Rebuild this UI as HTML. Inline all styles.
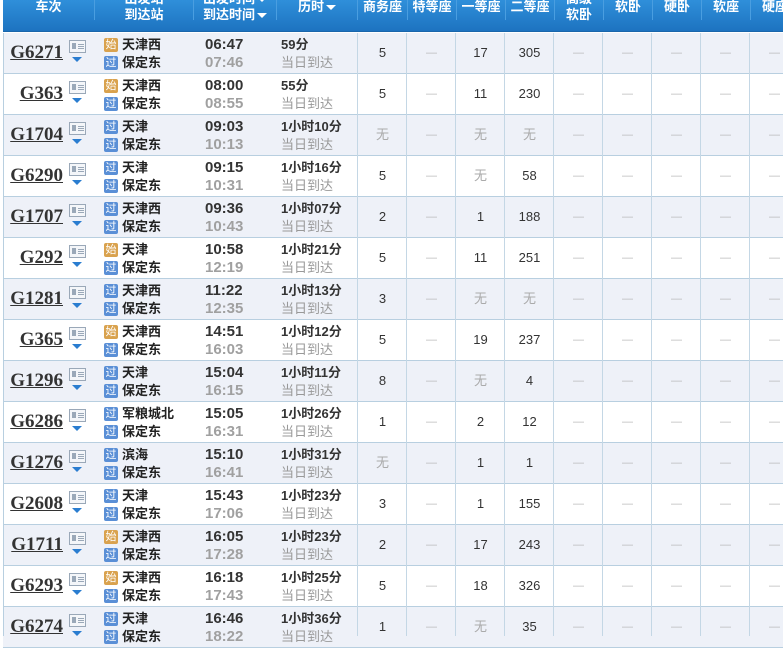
<!DOCTYPE html>
<html><head><meta charset="utf-8"><style>
*{margin:0;padding:0;box-sizing:border-box}
body{width:783px;height:636px;overflow:hidden;background:#fff;font-family:"Liberation Sans","Noto Sans CJK SC",sans-serif;position:relative}
.hd{position:absolute;left:3px;top:0;width:780px;height:32px;background:linear-gradient(#2f8fda,#1d73c0);border-bottom:1px solid #1a66ab}
.hs{position:absolute;top:0;height:20px;width:1px;background:#1d5f9c;border-right:1px solid #4a9ee0}
.ht{position:absolute;color:#fff;font-weight:bold;font-size:13px;text-align:center;line-height:16px;white-space:nowrap}
.tri{display:inline-block;width:0;height:0;border-left:5px solid transparent;border-right:5px solid transparent;border-top:5px solid #fff;vertical-align:middle;margin-left:2px}
.r{position:absolute;left:3px;width:780px;height:41px;border-bottom:1px solid #b8cfe0}
.r.s{background:#eef1f8}
.r div{position:absolute;white-space:nowrap}
.no{right:720px;top:9px;font-family:"Liberation Serif",serif;font-weight:bold;font-size:19px;color:#333;text-decoration:underline;line-height:22px}
.ic{left:66px;top:7px;width:17px;height:13px;border:1px solid #9aa8b8;background:#f4f6f9}
.ic:before{content:"";position:absolute;left:2px;top:2px;width:4px;height:6px;background:#9aa8b8}
.ic:after{content:"";position:absolute;left:8px;top:3px;width:6px;height:1px;background:#9aa8b8;box-shadow:0 2px 0 #9aa8b8,0 4px 0 #9aa8b8}
.ar{left:69px;top:24px;width:0;height:0;border-left:5px solid transparent;border-right:5px solid transparent;border-top:5px solid #2a7dd0}
.b{left:101px;width:14px;height:14px;color:#fff;font-size:11px;line-height:14px;text-align:center;border-radius:2px}
.b1{top:5px}.b2{top:23px}
.o{background:#d9a24e}.u{background:#5a8fd6}
.st{left:119px;font-size:13px;font-weight:bold;color:#222;line-height:16px}
.s1{top:4px}.s2{top:22px}
.t{left:202px;font-size:15px;font-weight:bold;line-height:17px}
.t1{top:3px;color:#333}.t2{top:21px;color:#a0a0a0}
.d{left:278px;font-size:13px;line-height:16px}
.d1{top:4px;font-weight:bold;color:#333}.d2{top:22px;color:#999}
.c{top:12px;width:49px;text-align:center;font-size:13px;color:#333;line-height:16px}
.g{color:#aaa}
.x{color:#bbb;font-size:11px}
</style></head><body>
<div class="hd">
<div class="hs" style="left:91px"></div><div class="hs" style="left:190px"></div><div class="hs" style="left:273px"></div><div class="hs" style="left:354px"></div><div class="hs" style="left:404px"></div><div class="hs" style="left:453px"></div><div class="hs" style="left:502px"></div><div class="hs" style="left:551px"></div><div class="hs" style="left:600px"></div><div class="hs" style="left:649px"></div><div class="hs" style="left:698px"></div><div class="hs" style="left:747px"></div>
<div class="ht" style="left:0;width:91px;top:-1px">车次</div>
<div class="ht" style="left:92px;width:98px;top:-9px">出发站<br>到达站</div>
<div class="ht" style="left:191px;width:82px;top:-9px">出发时间<span class="tri"></span><br>到达时间<span class="tri"></span></div>
<div class="ht" style="left:274px;width:80px;top:-1px">历时<span class="tri"></span></div>
<div class="ht" style="left:355px;width:49px;top:-1px">商务座</div>
<div class="ht" style="left:405px;width:48px;top:-1px">特等座</div>
<div class="ht" style="left:454px;width:48px;top:-1px">一等座</div>
<div class="ht" style="left:503px;width:48px;top:-1px">二等座</div>
<div class="ht" style="left:552px;width:48px;top:-9px">高级<br>软卧</div>
<div class="ht" style="left:601px;width:48px;top:-1px">软卧</div>
<div class="ht" style="left:650px;width:48px;top:-1px">硬卧</div>
<div class="ht" style="left:699px;width:48px;top:-1px">软座</div>
<div class="ht" style="left:748px;width:48px;top:-1px">硬座</div>
</div>

<div class="r s" style="top:33px"><div class="no">G6271</div><div class="ic"></div><div class="ar"></div><div class="b b1 o">始</div><div class="b b2 u">过</div><div class="st s1">天津西</div><div class="st s2">保定东</div><div class="t t1">06:47</div><div class="t t2">07:46</div><div class="d d1">59分</div><div class="d d2">当日到达</div><div class="c" style="left:355px">5</div><div class="c x" style="left:404px">—</div><div class="c" style="left:453px">17</div><div class="c" style="left:502px">305</div><div class="c x" style="left:551px">—</div><div class="c x" style="left:600px">—</div><div class="c x" style="left:649px">—</div><div class="c x" style="left:698px">—</div><div class="c x" style="left:747px">—</div></div>
<div class="r" style="top:74px"><div class="no">G363</div><div class="ic"></div><div class="ar"></div><div class="b b1 o">始</div><div class="b b2 u">过</div><div class="st s1">天津西</div><div class="st s2">保定东</div><div class="t t1">08:00</div><div class="t t2">08:55</div><div class="d d1">55分</div><div class="d d2">当日到达</div><div class="c" style="left:355px">5</div><div class="c x" style="left:404px">—</div><div class="c" style="left:453px">11</div><div class="c" style="left:502px">230</div><div class="c x" style="left:551px">—</div><div class="c x" style="left:600px">—</div><div class="c x" style="left:649px">—</div><div class="c x" style="left:698px">—</div><div class="c x" style="left:747px">—</div></div>
<div class="r s" style="top:115px"><div class="no">G1704</div><div class="ic"></div><div class="ar"></div><div class="b b1 u">过</div><div class="b b2 u">过</div><div class="st s1">天津</div><div class="st s2">保定东</div><div class="t t1">09:03</div><div class="t t2">10:13</div><div class="d d1">1小时10分</div><div class="d d2">当日到达</div><div class="c g" style="left:355px">无</div><div class="c x" style="left:404px">—</div><div class="c g" style="left:453px">无</div><div class="c g" style="left:502px">无</div><div class="c x" style="left:551px">—</div><div class="c x" style="left:600px">—</div><div class="c x" style="left:649px">—</div><div class="c x" style="left:698px">—</div><div class="c x" style="left:747px">—</div></div>
<div class="r" style="top:156px"><div class="no">G6290</div><div class="ic"></div><div class="ar"></div><div class="b b1 u">过</div><div class="b b2 u">过</div><div class="st s1">天津</div><div class="st s2">保定东</div><div class="t t1">09:15</div><div class="t t2">10:31</div><div class="d d1">1小时16分</div><div class="d d2">当日到达</div><div class="c" style="left:355px">5</div><div class="c x" style="left:404px">—</div><div class="c g" style="left:453px">无</div><div class="c" style="left:502px">58</div><div class="c x" style="left:551px">—</div><div class="c x" style="left:600px">—</div><div class="c x" style="left:649px">—</div><div class="c x" style="left:698px">—</div><div class="c x" style="left:747px">—</div></div>
<div class="r s" style="top:197px"><div class="no">G1707</div><div class="ic"></div><div class="ar"></div><div class="b b1 u">过</div><div class="b b2 u">过</div><div class="st s1">天津西</div><div class="st s2">保定东</div><div class="t t1">09:36</div><div class="t t2">10:43</div><div class="d d1">1小时07分</div><div class="d d2">当日到达</div><div class="c" style="left:355px">2</div><div class="c x" style="left:404px">—</div><div class="c" style="left:453px">1</div><div class="c" style="left:502px">188</div><div class="c x" style="left:551px">—</div><div class="c x" style="left:600px">—</div><div class="c x" style="left:649px">—</div><div class="c x" style="left:698px">—</div><div class="c x" style="left:747px">—</div></div>
<div class="r" style="top:238px"><div class="no">G292</div><div class="ic"></div><div class="ar"></div><div class="b b1 o">始</div><div class="b b2 u">过</div><div class="st s1">天津</div><div class="st s2">保定东</div><div class="t t1">10:58</div><div class="t t2">12:19</div><div class="d d1">1小时21分</div><div class="d d2">当日到达</div><div class="c" style="left:355px">5</div><div class="c x" style="left:404px">—</div><div class="c" style="left:453px">11</div><div class="c" style="left:502px">251</div><div class="c x" style="left:551px">—</div><div class="c x" style="left:600px">—</div><div class="c x" style="left:649px">—</div><div class="c x" style="left:698px">—</div><div class="c x" style="left:747px">—</div></div>
<div class="r s" style="top:279px"><div class="no">G1281</div><div class="ic"></div><div class="ar"></div><div class="b b1 u">过</div><div class="b b2 u">过</div><div class="st s1">天津西</div><div class="st s2">保定东</div><div class="t t1">11:22</div><div class="t t2">12:35</div><div class="d d1">1小时13分</div><div class="d d2">当日到达</div><div class="c" style="left:355px">3</div><div class="c x" style="left:404px">—</div><div class="c g" style="left:453px">无</div><div class="c g" style="left:502px">无</div><div class="c x" style="left:551px">—</div><div class="c x" style="left:600px">—</div><div class="c x" style="left:649px">—</div><div class="c x" style="left:698px">—</div><div class="c x" style="left:747px">—</div></div>
<div class="r" style="top:320px"><div class="no">G365</div><div class="ic"></div><div class="ar"></div><div class="b b1 o">始</div><div class="b b2 u">过</div><div class="st s1">天津西</div><div class="st s2">保定东</div><div class="t t1">14:51</div><div class="t t2">16:03</div><div class="d d1">1小时12分</div><div class="d d2">当日到达</div><div class="c" style="left:355px">5</div><div class="c x" style="left:404px">—</div><div class="c" style="left:453px">19</div><div class="c" style="left:502px">237</div><div class="c x" style="left:551px">—</div><div class="c x" style="left:600px">—</div><div class="c x" style="left:649px">—</div><div class="c x" style="left:698px">—</div><div class="c x" style="left:747px">—</div></div>
<div class="r s" style="top:361px"><div class="no">G1296</div><div class="ic"></div><div class="ar"></div><div class="b b1 u">过</div><div class="b b2 u">过</div><div class="st s1">天津</div><div class="st s2">保定东</div><div class="t t1">15:04</div><div class="t t2">16:15</div><div class="d d1">1小时11分</div><div class="d d2">当日到达</div><div class="c" style="left:355px">8</div><div class="c x" style="left:404px">—</div><div class="c g" style="left:453px">无</div><div class="c" style="left:502px">4</div><div class="c x" style="left:551px">—</div><div class="c x" style="left:600px">—</div><div class="c x" style="left:649px">—</div><div class="c x" style="left:698px">—</div><div class="c x" style="left:747px">—</div></div>
<div class="r" style="top:402px"><div class="no">G6286</div><div class="ic"></div><div class="ar"></div><div class="b b1 u">过</div><div class="b b2 u">过</div><div class="st s1">军粮城北</div><div class="st s2">保定东</div><div class="t t1">15:05</div><div class="t t2">16:31</div><div class="d d1">1小时26分</div><div class="d d2">当日到达</div><div class="c" style="left:355px">1</div><div class="c x" style="left:404px">—</div><div class="c" style="left:453px">2</div><div class="c" style="left:502px">12</div><div class="c x" style="left:551px">—</div><div class="c x" style="left:600px">—</div><div class="c x" style="left:649px">—</div><div class="c x" style="left:698px">—</div><div class="c x" style="left:747px">—</div></div>
<div class="r s" style="top:443px"><div class="no">G1276</div><div class="ic"></div><div class="ar"></div><div class="b b1 u">过</div><div class="b b2 u">过</div><div class="st s1">滨海</div><div class="st s2">保定东</div><div class="t t1">15:10</div><div class="t t2">16:41</div><div class="d d1">1小时31分</div><div class="d d2">当日到达</div><div class="c g" style="left:355px">无</div><div class="c x" style="left:404px">—</div><div class="c" style="left:453px">1</div><div class="c" style="left:502px">1</div><div class="c x" style="left:551px">—</div><div class="c x" style="left:600px">—</div><div class="c x" style="left:649px">—</div><div class="c x" style="left:698px">—</div><div class="c x" style="left:747px">—</div></div>
<div class="r" style="top:484px"><div class="no">G2608</div><div class="ic"></div><div class="ar"></div><div class="b b1 u">过</div><div class="b b2 u">过</div><div class="st s1">天津</div><div class="st s2">保定东</div><div class="t t1">15:43</div><div class="t t2">17:06</div><div class="d d1">1小时23分</div><div class="d d2">当日到达</div><div class="c" style="left:355px">3</div><div class="c x" style="left:404px">—</div><div class="c" style="left:453px">1</div><div class="c" style="left:502px">155</div><div class="c x" style="left:551px">—</div><div class="c x" style="left:600px">—</div><div class="c x" style="left:649px">—</div><div class="c x" style="left:698px">—</div><div class="c x" style="left:747px">—</div></div>
<div class="r s" style="top:525px"><div class="no">G1711</div><div class="ic"></div><div class="ar"></div><div class="b b1 o">始</div><div class="b b2 u">过</div><div class="st s1">天津西</div><div class="st s2">保定东</div><div class="t t1">16:05</div><div class="t t2">17:28</div><div class="d d1">1小时23分</div><div class="d d2">当日到达</div><div class="c" style="left:355px">2</div><div class="c x" style="left:404px">—</div><div class="c" style="left:453px">17</div><div class="c" style="left:502px">243</div><div class="c x" style="left:551px">—</div><div class="c x" style="left:600px">—</div><div class="c x" style="left:649px">—</div><div class="c x" style="left:698px">—</div><div class="c x" style="left:747px">—</div></div>
<div class="r" style="top:566px"><div class="no">G6293</div><div class="ic"></div><div class="ar"></div><div class="b b1 o">始</div><div class="b b2 u">过</div><div class="st s1">天津西</div><div class="st s2">保定东</div><div class="t t1">16:18</div><div class="t t2">17:43</div><div class="d d1">1小时25分</div><div class="d d2">当日到达</div><div class="c" style="left:355px">5</div><div class="c x" style="left:404px">—</div><div class="c" style="left:453px">18</div><div class="c" style="left:502px">326</div><div class="c x" style="left:551px">—</div><div class="c x" style="left:600px">—</div><div class="c x" style="left:649px">—</div><div class="c x" style="left:698px">—</div><div class="c x" style="left:747px">—</div></div>
<div class="r s" style="top:607px"><div class="no">G6274</div><div class="ic"></div><div class="ar"></div><div class="b b1 u">过</div><div class="b b2 u">过</div><div class="st s1">天津</div><div class="st s2">保定东</div><div class="t t1">16:46</div><div class="t t2">18:22</div><div class="d d1">1小时36分</div><div class="d d2">当日到达</div><div class="c" style="left:355px">1</div><div class="c x" style="left:404px">—</div><div class="c g" style="left:453px">无</div><div class="c" style="left:502px">35</div><div class="c x" style="left:551px">—</div><div class="c x" style="left:600px">—</div><div class="c x" style="left:649px">—</div><div class="c x" style="left:698px">—</div><div class="c x" style="left:747px">—</div></div>

<div style="position:absolute;left:3px;top:33px;width:1px;height:603px;background:#b8cfe0"></div>
<div style="position:absolute;left:357px;top:33px;width:1px;height:603px;background:#c4d7e5"></div>
<div style="position:absolute;left:406px;top:33px;width:1px;height:603px;background:#c4d7e5"></div>
<div style="position:absolute;left:455px;top:33px;width:1px;height:603px;background:#c4d7e5"></div>
<div style="position:absolute;left:504px;top:33px;width:1px;height:603px;background:#c4d7e5"></div>
<div style="position:absolute;left:553px;top:33px;width:1px;height:603px;background:#c4d7e5"></div>
<div style="position:absolute;left:602px;top:33px;width:1px;height:603px;background:#c4d7e5"></div>
<div style="position:absolute;left:651px;top:33px;width:1px;height:603px;background:#c4d7e5"></div>
<div style="position:absolute;left:700px;top:33px;width:1px;height:603px;background:#c4d7e5"></div>
<div style="position:absolute;left:749px;top:33px;width:1px;height:603px;background:#c4d7e5"></div>
</body></html>
